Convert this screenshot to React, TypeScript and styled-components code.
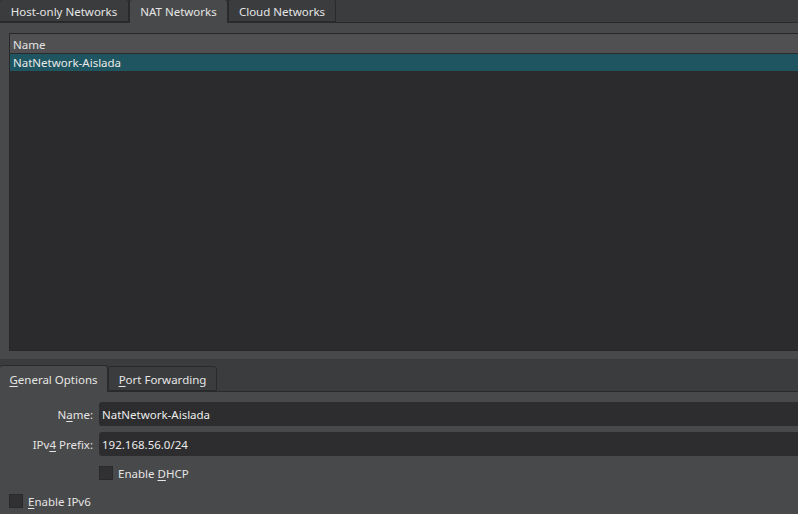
import styled, { createGlobalStyle } from 'styled-components';

const GlobalStyle = createGlobalStyle`
  html, body {
    margin: 0;
    padding: 0;
    background: #48494a;
  }
  body {
    font-family: "Noto Sans", "Liberation Sans", sans-serif;
    font-size: 11.5px;
    color: #e4e4e4;
  }
`;

const Window = styled.div`
  width: 798px;
  height: 514px;
  overflow: hidden;
  display: flex;
  flex-direction: column;
  background: #48494a;
`;

interface ITabBar {
  Height: string;
}

const TabBar = styled.div<ITabBar>`
  height: ${(props) => props.Height};
  flex-shrink: 0;
  display: flex;
  align-items: flex-end;
  background: #3b3c3e;
  border-bottom: 1px solid #2a2a2c;
  box-sizing: border-box;
`;

interface ITab {
  Active?: boolean;
  Width: string;
  Height: string;
  Shift: string;
}

const Tab = styled.div<ITab>`
  width: ${(props) => props.Width};
  height: ${(props) => props.Height};
  box-sizing: border-box;
  display: flex;
  align-items: center;
  justify-content: center;
  margin-bottom: ${(props) => (props.Active ? '-1px' : '0')};
  background: ${(props) => (props.Active ? '#48494a' : '#3b3c3e')};
  border: 1px solid #2a2a2c;
  border-bottom: ${(props) => (props.Active ? 'none' : '1px solid #2a2a2c')};
  border-radius: 3px 3px 0 0;
  padding-top: ${(props) => props.Shift};
  white-space: nowrap;
  color: #e6e6e6;
`;

const Body = styled.div`
  flex: 1;
  padding: 10px 0 0 9px;
  display: flex;
  flex-direction: column;
`;

const ListBox = styled.div`
  height: 318px;
  background: #2b2b2d;
  border: 1px solid #27272a;
  border-right: none;
  box-sizing: border-box;
`;

const HeaderRow = styled.div`
  height: 20px;
  display: flex;
  align-items: center;
  padding-left: 3px;
  padding-top: 1px;
  box-sizing: border-box;
  background: #505052;
  border-bottom: 1px solid #2a2a2c;
`;

const Row = styled.div`
  height: 17px;
  display: flex;
  align-items: center;
  padding-left: 3px;
  background: #1e5560;
  color: #eaeaea;
`;

const Splitter = styled.div`
  height: 8px;
  flex-shrink: 0;
`;

const Pane = styled.div`
  flex: 1;
  display: flex;
  flex-direction: column;
  background: #48494a;
`;

const Form = styled.div`
  display: grid;
  grid-template-columns: 93px 1fr;
  column-gap: 6px;
  row-gap: 6px;
  padding-top: 10px;
  align-items: center;
`;

const Label = styled.div`
  text-align: right;
  white-space: nowrap;
  padding-top: 1px;
`;

const Input = styled.div`
  height: 24px;
  display: flex;
  align-items: center;
  padding: 1px 0 0 3px;
  box-sizing: border-box;
  background: #2d2d2f;
  border-radius: 3px 0 0 3px;
  color: #ececec;
`;

interface ICheckRow {
  Indent: string;
  Top: string;
}

const CheckRow = styled.div<ICheckRow>`
  display: flex;
  align-items: center;
  gap: 5px;
  margin-left: ${(props) => props.Indent};
  margin-top: ${(props) => props.Top};
  height: 14px;
`;

const Box = styled.span`
  width: 14px;
  height: 14px;
  box-sizing: border-box;
  background: #313133;
  border: 1px solid #2a2a2c;
`;

const Key = styled.span`
  text-decoration: underline;
  text-underline-offset: 2px;
`;

export default function App() {
  return (
    <Window>
      <GlobalStyle />
      <TabBar Height="23px">
        <Tab Width="129px" Height="23px" Shift="2px" style={{ borderLeft: 'none' }}>
          Host-only Networks
        </Tab>
        <Tab Active Width="99px" Height="24px" Shift="0px">
          NAT Networks
        </Tab>
        <Tab Width="108px" Height="23px" Shift="2px">
          Cloud Networks
        </Tab>
      </TabBar>
      <Body>
        <ListBox>
          <HeaderRow>Name</HeaderRow>
          <Row>NatNetwork-Aislada</Row>
        </ListBox>
      </Body>
      <Splitter />
      <Pane>
        <TabBar Height="33px">
          <Tab Active Width="108px" Height="27px" Shift="1px" style={{ borderLeft: 'none' }}>
            <span>
              <Key>G</Key>eneral Options
            </span>
          </Tab>
          <Tab Width="109px" Height="25px" Shift="2px">
            <span>
              <Key>P</Key>ort Forwarding
            </span>
          </Tab>
        </TabBar>
        <Form>
          <Label>
            N<Key>a</Key>me:
          </Label>
          <Input>NatNetwork-Aislada</Input>
          <Label>
            IPv<Key>4</Key> Prefix:
          </Label>
          <Input>192.168.56.0/24</Input>
        </Form>
        <CheckRow Indent="99px" Top="10px">
          <Box />
          <span>
            Enable <Key>D</Key>HCP
          </span>
        </CheckRow>
        <CheckRow Indent="9px" Top="14px">
          <Box />
          <span>
            <Key>E</Key>nable IPv6
          </span>
        </CheckRow>
      </Pane>
    </Window>
  );
}
